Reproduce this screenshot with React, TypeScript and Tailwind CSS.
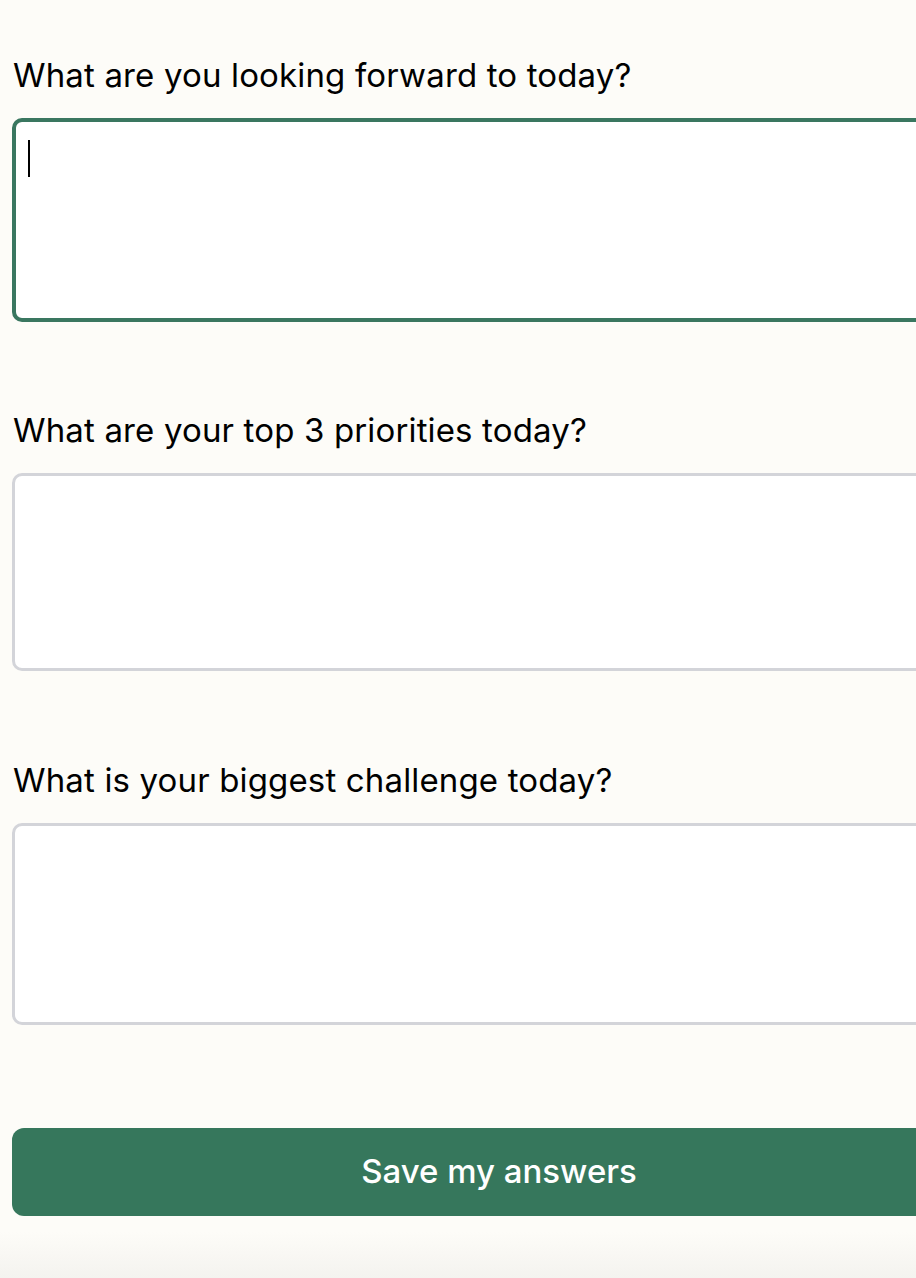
import React from "react";

const questions = [
  { q: "What are you looking forward to today?", mt: "" },
  { q: "What are your top 3 priorities today?", mt: "mt-[84px]" },
  { q: "What is your biggest challenge today?", mt: "mt-[85px]" },
];

export default function App() {
  return (
    <div
      className="relative min-h-[1278px] w-[916px] overflow-hidden bg-[#fdfcf8]"
      style={{ fontFamily: "Inter, 'Liberation Sans', sans-serif" }}
    >
      <div className="flex w-[986px] flex-col pl-[12px] pt-[51px]">
        {questions.map((item, i) => (
          <div key={item.q} className={"flex flex-col " + item.mt}>
            <label className="pl-[1px] text-[33px] leading-[48px] tracking-[0.15px] text-black">
              {item.q}
            </label>
            <div className="relative mt-[19px]">
              {i === 0 ? (
                <textarea className="block h-[204px] w-full resize-none rounded-[10px] border-[4px] border-[#3a7760] bg-white px-[14px] py-[16px] text-[32px] outline-none" />
              ) : i === 1 ? (
                <textarea className="block h-[198px] w-full resize-none rounded-[10px] border-[3px] border-[#d3d4d9] bg-white px-[14px] py-[16px] text-[32px] outline-none" />
              ) : (
                <textarea className="block h-[202px] w-full resize-none rounded-[10px] border-[3px] border-[#d3d4d9] bg-white px-[14px] py-[16px] text-[32px] outline-none" />
              )}
              {i === 0 && (
                <span className="absolute left-[16px] top-[22px] h-[37px] w-[2px] bg-black" />
              )}
            </div>
          </div>
        ))}
        <button className="mt-[103px] h-[88px] w-full rounded-[12px] bg-[#36775c] text-[33px] font-medium text-white">
          Save my answers
        </button>
      </div>
      <div className="absolute bottom-0 left-0 h-[46px] w-full bg-gradient-to-b from-[#fdfcf8] to-[#f4f3ef]" />
    </div>
  );
}
